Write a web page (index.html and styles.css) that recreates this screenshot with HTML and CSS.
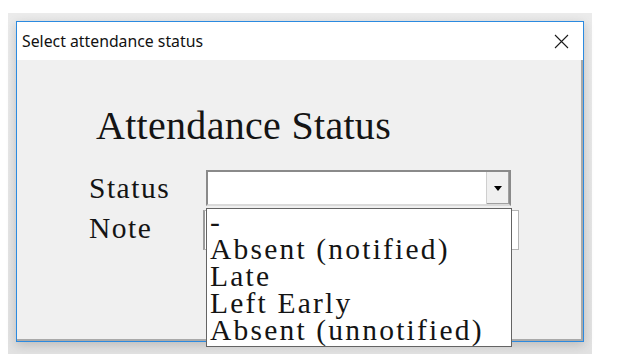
FILE: index.html
```html
<!DOCTYPE html>
<html lang="en">
  <head>
    <meta charset="UTF-8" />
    <meta name="viewport" content="width=device-width, initial-scale=1.0" />
    <title>Select attendance status</title>
    <link rel="stylesheet" href="styles.css">
  </head>
  <body>
    <div class="desktop">
      <div class="window">
        <div class="titlebar">
          <span class="title">Select attendance status</span>
          <svg class="close" width="15" height="15" viewBox="0 0 15 15">
            <path d="M1 1L14 14M14 1L1 14" stroke="#1a1a1a" stroke-width="1.1" fill="none" />
          </svg>
        </div>
        <div class="content">
          <h1 class="heading">Attendance Status</h1>
          <div class="form">
            <label class="label">Status</label>
            <div class="field">
              <div class="combo">
                <div class="combo-value"></div>
                <div class="combo-btn"><span class="arrow"></span></div>
              </div>
              <div class="dropdown">
                <ul class="options">
                  <li>-</li>
                  <li>Absent (notified)</li>
                  <li>Late</li>
                  <li>Left Early</li>
                  <li>Absent (unnotified)</li>
                </ul>
              </div>
            </div>
            <label class="label">Note</label>
            <div class="field">
              <div class="note-input"></div>
            </div>
          </div>
        </div>
      </div>
    </div>
  </body>
</html>
```
FILE: styles.css
```css
body {
  margin: 0;
  background: #fff;
}
.desktop {
  width: 584px;
  height: 341px;
  margin: 13px 0 0 8px;
  padding: 8px 0 0 8px;
  box-sizing: border-box;
  background: linear-gradient(#ebebeb, #e2e2e2);
}
.window {
  width: 568px;
  height: 321px;
  box-sizing: border-box;
  border: 1px solid #2b8ae0;
  box-shadow: 0 3px 10px rgba(0, 0, 0, 0.18);
  display: flex;
  flex-direction: column;
}
.titlebar {
  height: 38px;
  flex: none;
  background: #fff;
  display: flex;
  align-items: center;
  justify-content: space-between;
  padding: 0 14px 0 5px;
}
.title {
  font-family: "Noto Sans", sans-serif;
  font-size: 15.8px;
  color: #111;
}
.close {
  display: block;
}
.content {
  flex: 1;
  background: #f0f0f0;
  box-shadow: inset -2px -2px 0 #a9a9a9;
}
.heading {
  margin: 46px 0 0 79px;
  height: 40px;
  font-family: "Liberation Serif", serif;
  font-size: 40px;
  line-height: 1;
  letter-spacing: 0.3px;
  font-weight: normal;
  color: #141414;
}
.form {
  margin: 24px 0 0 72px;
  display: grid;
  grid-template-columns: 117px 316px;
  grid-template-rows: 36px 40px;
  row-gap: 4px;
}
.label {
  margin-top: 4px;
  font-family: "Liberation Serif", serif;
  font-size: 29.5px;
  line-height: 1;
  letter-spacing: 1.5px;
  color: #141414;
}
.field {
  position: relative;
}
.combo {
  width: 305px;
  height: 36px;
  box-sizing: border-box;
  border: 2px solid #8a8a8a;
  border-bottom-color: #dadada;
  background: #fff;
  display: flex;
  justify-content: flex-end;
}
.combo-btn {
  width: 22px;
  background: #f0f0f0;
  border-left: 1px solid #cfcfcf;
  box-shadow: inset -1px -1px 0 #a0a0a0;
  display: flex;
  align-items: center;
  justify-content: center;
}
.arrow {
  width: 0;
  height: 0;
  border-left: 4px solid transparent;
  border-right: 4px solid transparent;
  border-top: 5px solid #000;
}
.dropdown {
  position: absolute;
  top: 38px;
  left: 0;
  z-index: 2;
  width: 306px;
  height: 139px;
  box-sizing: border-box;
  border: 1px solid #646464;
  background: #fff;
}
.options {
  margin: 0;
  padding: 0 0 0 3px;
  list-style: none;
  font-family: "Liberation Serif", serif;
  font-size: 29.5px;
  line-height: 27px;
  letter-spacing: 2.2px;
  color: #141414;
}
.note-input {
  margin-left: -3px;
  width: 316px;
  height: 40px;
  box-sizing: border-box;
  border: 1px solid #b4b4b4;
  border-left: 2px solid #9c9c9c;
  background: #fff;
}
```
